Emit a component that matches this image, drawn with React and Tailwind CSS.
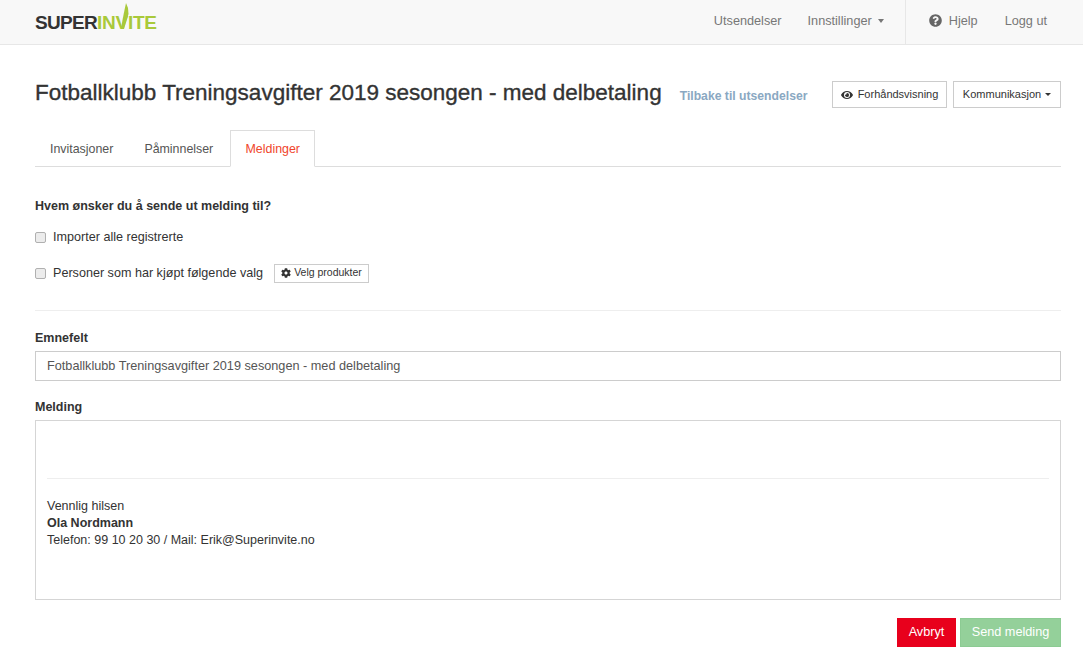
import React from "react";
import { FaEye, FaCog, FaQuestionCircle } from "react-icons/fa";

const Caret = ({ className = "border-x-[4px] border-t-[4px]" }) => (
  <span className={`inline-block w-0 h-0 border-x-transparent border-t-current ${className}`} />
);

function Logo() {
  return (
    <div className="relative flex items-baseline text-[19px] font-bold leading-none font-['Liberation_Sans',sans-serif]">
      <span className="text-[#333333] tracking-[-0.7px]">SUPER</span>
      <span className="text-[#a9c93a] tracking-[-0.25px]">INVITE</span>
      <svg className="absolute left-[85px] -top-[10px]" width="12" height="27" viewBox="0 0 12 27">
        <path d="M1 26 L4 26 L8.5 11 L8 5 L6 0 L4.5 7 L2.5 17 Z" fill="#a9c93a" />
      </svg>
    </div>
  );
}

const Check = () => (
  <span className="w-[11px] h-[11px] rounded-[2px] border border-[#b0b0b0] bg-[#ececec] mr-[7px]" />
);

export default function App() {
  return (
    <div className="min-h-[662px] bg-white text-[12.6px] text-[#333333] font-['Liberation_Sans',Arial,sans-serif]">
      <nav className="h-[45px] bg-[#f8f8f8] border-b border-[#e7e7e7] flex items-center pl-[35px]">
        <Logo />
        <div className="ml-auto flex items-center h-full text-[#777777] text-[12.7px]">
          <span className="mr-[26px] pb-[1px]">Utsendelser</span>
          <span className="flex items-center gap-[6px] mr-[21px] pb-[1px]">Innstillinger <Caret className="border-x-[3.5px] border-t-[4px]" /></span>
          <div className="h-full border-l border-[#e7e7e7] flex items-center pl-[23px] pr-[36px] pb-[1px]">
            <FaQuestionCircle className="text-[13px] text-[#666666] mr-[7px] mb-[2px]" />
            <span className="mr-[27px]">Hjelp</span>
            <span>Logg ut</span>
          </div>
        </div>
      </nav>

      <main className="pr-[22px] pl-[35px]">
        <header className="flex items-center mt-[36px] h-[27px]">
          <h1 className="text-[22.5px] font-medium leading-[30px] -mt-[4px] [-webkit-text-stroke:0.35px_#333333] whitespace-nowrap">Fotballklubb Treningsavgifter 2019 sesongen - med delbetaling</h1>
          <a className="ml-[18px] mt-[3px] text-[12.2px] font-bold text-[#8aa8c2] whitespace-nowrap">Tilbake til utsendelser</a>
          <div className="ml-auto flex gap-[6px]">
            <button className="h-[27px] w-[115px] flex items-center justify-center gap-[5px] border border-[#cccccc] bg-white text-[11px] text-[#333333]">
              <FaEye className="text-[12px]" /> Forhåndsvisning
            </button>
            <button className="h-[27px] w-[108px] flex items-center justify-center gap-[4px] border border-[#cccccc] bg-white text-[11px] text-[#333333]">
              Kommunikasjon <Caret className="border-x-[3px] border-t-[3px]" />
            </button>
          </div>
        </header>

        <div className="flex border-b border-[#dddddd] h-[37px] mt-[22px] text-[12.4px]">
          <span className="pl-[15px] pr-[15px] pt-[10px] text-[#555555]">Invitasjoner</span>
          <span className="pl-[15px] pr-[17px] pt-[10px] text-[#555555] ml-[1px]">Påminnelser</span>
          <span className="w-[85px] text-center pt-[9px] h-[37px] text-[#f0452b] bg-white border border-[#dddddd] border-b-white">Meldinger</span>
        </div>

        <section className="pt-[31px]">
          <h2 className="font-bold text-[12.5px] leading-[16px]">Hvem ønsker du å sende ut melding til?</h2>
          <label className="flex items-center mt-[15px] h-[16px]">
            <Check />
            Importer alle registrerte
          </label>
          <div className="flex items-center mt-[17px] h-[22px]">
            <Check />
            Personer som har kjøpt følgende valg
            <button className="ml-[11px] h-[19px] w-[95px] flex items-center justify-center gap-[3px] border border-[#cccccc] bg-white text-[10.5px]">
              <FaCog className="text-[10px]" /> Velg produkter
            </button>
          </div>
        </section>

        <hr className="mt-[26px] border-t border-[#eeeeee]" />

        <section className="pt-[20px]">
          <label className="block font-bold text-[12.5px] leading-[14px]">Emnefelt</label>
          <div className="mt-[6px] h-[30px] border border-[#cccccc] flex items-center px-[11px] pt-[1px] text-[12.7px] text-[#555555]">
            Fotballklubb Treningsavgifter 2019 sesongen - med delbetaling
          </div>
          <label className="block mt-[19px] font-bold text-[12.5px] leading-[14px]">Melding</label>
          <div className="mt-[6px] h-[180px] border border-[#d5d5d5] px-[11px] pt-[57px] text-[12.5px]">
            <hr className="border-t border-[#eeeeee]" />
            <p className="mt-[19px] leading-[17px]">Vennlig hilsen</p>
            <p className="leading-[17px] font-bold">Ola Nordmann</p>
            <p className="leading-[17px]">Telefon: 99 10 20 30 / Mail: Erik@Superinvite.no</p>
          </div>
        </section>

        <div className="flex justify-end gap-[4px] mt-[18px]">
          <button className="h-[29px] w-[59px] pt-[1px] bg-[#e8001c] border border-[#e8001c] text-white text-[12.7px]">Avbryt</button>
          <button className="h-[29px] w-[101px] pt-[1px] bg-[#94d09a] border border-[#8ccb93] text-white text-[12.7px] font-medium">Send melding</button>
        </div>
      </main>
    </div>
  );
}
